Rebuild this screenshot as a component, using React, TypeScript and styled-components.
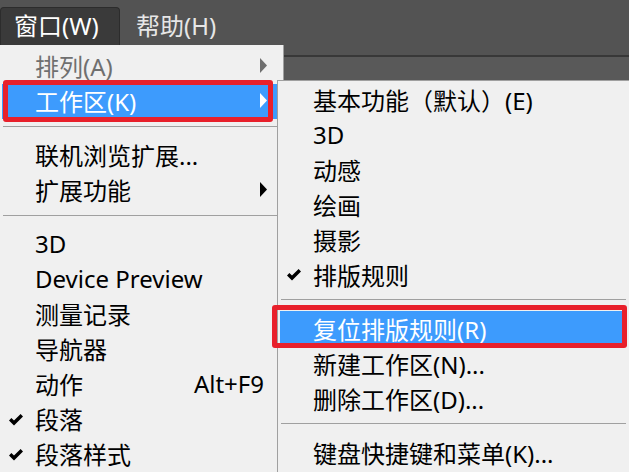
import React, { FC } from 'react';
import styled, { createGlobalStyle } from 'styled-components';

const FONT = `"Noto Sans", "Noto Sans CJK SC", sans-serif`;

const GlobalStyle = createGlobalStyle`
  html, body {
    margin: 0;
    padding: 0;
    background: #535353;
    overflow: hidden;
  }
`;

type MenuEntry =
  | { kind: 'sep' }
  | {
      kind: 'item';
      label: string;
      disabled?: boolean;
      checked?: boolean;
      submenu?: boolean;
      active?: boolean;
      marked?: boolean;
      shortcut?: string;
    };

const windowMenu: MenuEntry[] = [
  { kind: 'item', label: '排列(A)', disabled: true, submenu: true },
  { kind: 'item', label: '工作区(K)', submenu: true, active: true, marked: true },
  { kind: 'sep' },
  { kind: 'item', label: '联机浏览扩展...' },
  { kind: 'item', label: '扩展功能', submenu: true },
  { kind: 'sep' },
  { kind: 'item', label: '3D' },
  { kind: 'item', label: 'Device Preview' },
  { kind: 'item', label: '测量记录' },
  { kind: 'item', label: '导航器' },
  { kind: 'item', label: '动作', shortcut: 'Alt+F9' },
  { kind: 'item', label: '段落', checked: true },
  { kind: 'item', label: '段落样式', checked: true },
];

const workspaceMenu: MenuEntry[] = [
  { kind: 'item', label: '基本功能（默认）(E)' },
  { kind: 'item', label: '3D' },
  { kind: 'item', label: '动感' },
  { kind: 'item', label: '绘画' },
  { kind: 'item', label: '摄影' },
  { kind: 'item', label: '排版规则', checked: true },
  { kind: 'sep' },
  { kind: 'item', label: '复位排版规则(R)', active: true, marked: true },
  { kind: 'item', label: '新建工作区(N)...' },
  { kind: 'item', label: '删除工作区(D)...' },
  { kind: 'sep' },
  { kind: 'item', label: '键盘快捷键和菜单(K)...' },
];

const CheckIcon: FC = () => (
  <CheckSvg viewBox="0 0 14 12" width={14} height={12}>
    <polygon points="0,6.5 2.4,4 5,6.6 11.6,0 14,2.4 5,11.4" fill="currentColor" />
  </CheckSvg>
);

const ArrowIcon: FC = () => (
  <ArrowSvg viewBox="0 0 7 15" width={7} height={15}>
    <polygon points="0,0 7,7.5 0,15" fill="currentColor" />
  </ArrowSvg>
);

const Menu: FC<{ entries: MenuEntry[]; variant: 'main' | 'sub' }> = ({ entries, variant }) => (
  <>
    {entries.map((entry, i) =>
      entry.kind === 'sep' ? (
        <Separator key={i} />
      ) : (
        <Item
          key={i}
          $active={entry.active}
          $disabled={entry.disabled}
          $marked={entry.marked}
          $variant={variant}
        >
          {entry.checked && <CheckIcon />}
          <Label>{entry.label}</Label>
          {entry.shortcut && <Shortcut>{entry.shortcut}</Shortcut>}
          {entry.submenu && <ArrowIcon />}
        </Item>
      )
    )}
  </>
);

const App: FC = () => (
  <Page>
    <GlobalStyle />
    <MenuBar>
      <MenuTitle $open>窗口(W)</MenuTitle>
      <MenuTitle>帮助(H)</MenuTitle>
    </MenuBar>
    <OptionsBar />
    <Workspace />

    <MainMenu>
      <Menu entries={windowMenu} variant="main" />
    </MainMenu>
    <SubMenu>
      <Menu entries={workspaceMenu} variant="sub" />
    </SubMenu>
  </Page>
);

export default App;

const Page = styled.div`
  position: relative;
  width: 629px;
  height: 472px;
  overflow: hidden;
  background: #535353;
  font-family: ${FONT};
`;

const MenuBar = styled.div`
  display: flex;
  align-items: flex-end;
  height: 45px;
  background: #535353;
`;

const MenuTitle = styled.div<{ $open?: boolean }>`
  box-sizing: border-box;
  width: ${(p) => (p.$open ? '120px' : 'auto')};
  height: 38px;
  padding: 0 0 0 ${(p) => (p.$open ? '13px' : '15px')};
  font-size: 24px;
  line-height: 36px;
  white-space: nowrap;
  color: ${(p) => (p.$open ? '#ffffff' : '#e6e6e6')};
  background: ${(p) => (p.$open ? '#3a3a3a' : 'transparent')};
  border: 1px solid ${(p) => (p.$open ? '#2c2c2c' : 'transparent')};
  border-bottom: none;
  border-radius: 4px 4px 0 0;
`;

const OptionsBar = styled.div`
  height: 10px;
  background: #535353;
  border-bottom: 2px solid #383838;
`;

const Workspace = styled.div`
  height: 440px;
  background: #595959;
`;

const MenuPanel = styled.div`
  position: absolute;
  box-sizing: border-box;
  display: flex;
  flex-direction: column;
  background: #f0f0f0;
  border: 1px solid #a0a0a0;
  padding: 4px 1px;
`;

const MainMenu = styled(MenuPanel)`
  left: -1px;
  top: 45px;
  width: 285px;
  height: 440px;
  border-top: none;
  padding-top: 4px;
`;

const SubMenu = styled(MenuPanel)`
  left: 277px;
  top: 80px;
  width: 353px;
  height: 400px;
  padding-top: 1px;
`;

const Item = styled.div<{
  $active?: boolean;
  $disabled?: boolean;
  $marked?: boolean;
  $variant: 'main' | 'sub';
}>`
  position: relative;
  display: flex;
  align-items: center;
  flex-shrink: 0;
  box-sizing: border-box;
  height: 35px;
  margin: 0 1px;
  padding: ${(p) => (p.$variant === 'main' ? '0 17px 3px 33px' : '0 0 0 33px')};
  font-size: 24px;
  color: ${(p) => (p.$active ? '#ffffff' : p.$disabled ? '#6f6f6f' : '#000000')};
  background: ${(p) => (p.$active ? '#3d9bfd' : 'transparent')};

  ${(p) =>
    p.$marked &&
    `
    &::after {
      content: '';
      position: absolute;
      box-sizing: border-box;
      top: ${p.$variant === 'main' ? '-4px' : '-6px'};
      bottom: ${p.$variant === 'main' ? '-3px' : '-2px'};
      left: ${p.$variant === 'main' ? '1px' : '-8px'};
      right: ${p.$variant === 'main' ? '8px' : '0'};
      border: 5px solid #e8202b;
      border-radius: 3px;
      pointer-events: none;
    }
  `}
`;

const Label = styled.span`
  white-space: nowrap;
`;

const Shortcut = styled.span`
  margin-left: auto;
  white-space: nowrap;
`;

const Separator = styled.div`
  flex-shrink: 0;
  height: 19px;
  margin: 0 2px;
  background: linear-gradient(#a0a0a0, #a0a0a0) no-repeat 0 7px / 100% 1px;
`;

const CheckSvg = styled.svg`
  position: absolute;
  left: 7px;
  top: 50%;
  margin-top: -6px;
`;

const ArrowSvg = styled.svg`
  margin-left: auto;
  margin-right: -3px;
  flex-shrink: 0;
`;
